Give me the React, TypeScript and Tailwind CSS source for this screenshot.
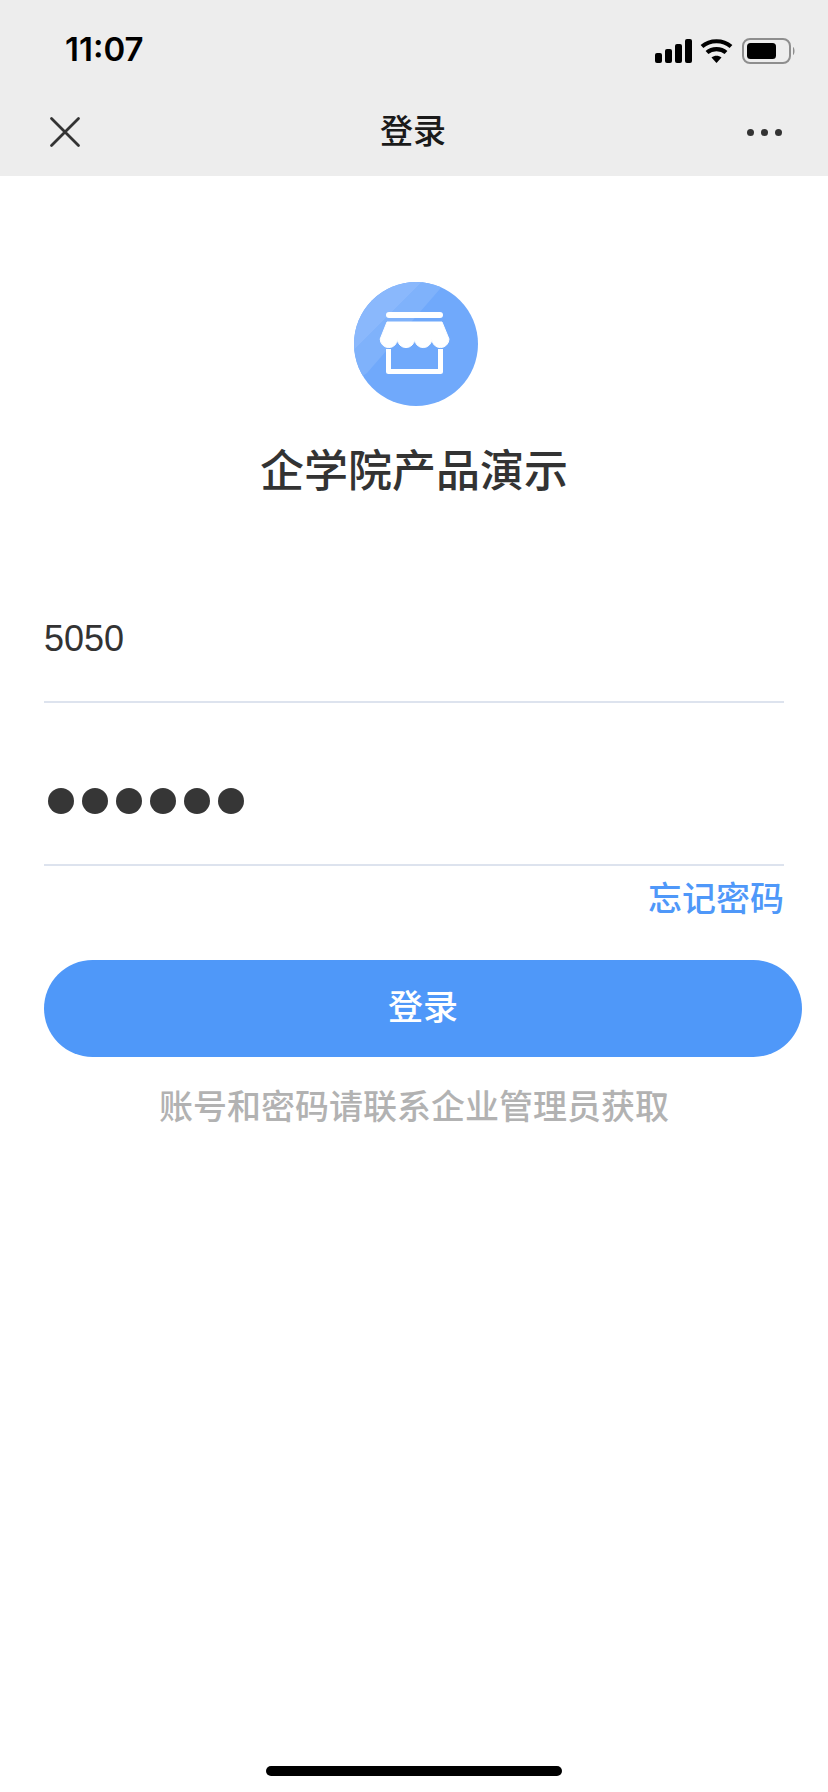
const font = { fontFamily: '"Liberation Sans","Noto Sans CJK SC",sans-serif' };

function StatusIcons() {
  return (
    <svg width="144" height="28" viewBox="0 0 144 28" className="block">
      <g fill="#000">
        <rect x="3" y="16" width="7" height="10" rx="2" />
        <rect x="13" y="12" width="7" height="14" rx="2" />
        <rect x="23" y="7" width="7" height="19" rx="2" />
        <rect x="33" y="2" width="7" height="24" rx="2" />
      </g>
      <g fill="none" stroke="#000" strokeWidth="4.2">
        <path d="M50 9.500C58 2.500 71 2.500 79 9.500" />
        <path d="M55 15.500C60 11 69 11 74 15.500" />
      </g>
      <path d="M59.500 20.500C62.500 18.300 66.500 18.300 69.500 20.500L64.500 26Z" fill="#000" />
      <rect x="91" y="2" width="47" height="24" rx="7" fill="none" stroke="#8e8e8e" strokeWidth="2" />
      <rect x="95" y="6" width="29" height="16" rx="3.500" fill="#000" />
      <path d="M141 10C143 11 143 17 141 18Z" fill="#8e8e8e" />
    </svg>
  );
}

function Logo() {
  return (
    <svg width="124" height="124" viewBox="0 0 124 124" className="block">
      <defs>
        <clipPath id="c"><circle cx="62" cy="62" r="62" /></clipPath>
      </defs>
      <g clipPath="url(#c)">
        <rect width="124" height="124" fill="#70a9fb" />
        <path d="M0 68L68 0H92L13 91L0 100Z" fill="#7fb2fb" />
        <path d="M0 68L68 0H0Z" fill="#8ab8fc" />
      </g>
      <rect x="32" y="30" width="57" height="6" rx="3" fill="#fff" />
      <path d="M33 40H88L95 57A8.600 8.600 0 0 1 77.800 57A8.600 8.600 0 0 1 60.600 57A8.600 8.600 0 0 1 43.400 57A8.600 8.600 0 0 1 26.200 57Z" fill="#fff" stroke="#fff" strokeWidth="1" strokeLinejoin="round" />
      <path d="M34.500 67V89.500H86.500V67" fill="none" stroke="#fff" strokeWidth="5" strokeLinejoin="round" strokeLinecap="butt" />
    </svg>
  );
}

export default function App() {
  return (
    <div className="relative w-[828px] h-[1792px] bg-white overflow-hidden" style={font}>
      <header className="h-[176px] bg-[#ededed] flex flex-col">
        <div className="h-[88px] flex items-end justify-between pl-[65px] pr-[32px] pb-[23px]">
          <span className="relative top-[1px] text-[33px] leading-[33px] font-semibold text-black font-['Inter']">11:07</span>
          <StatusIcons />
        </div>
        <div className="flex-1 flex items-center justify-between pl-[49px] pr-[46px]">
          <svg width="32" height="32" viewBox="0 0 32 32" className="block">
            <path d="M2.500 2.500L29.500 29.500M29.500 2.500L2.500 29.500" stroke="#333" strokeWidth="2.800" strokeLinecap="round" fill="none" />
          </svg>
          <span className="relative left-[-1px] text-[33px] leading-[40px] font-medium text-[#1a1a1a]">登录</span>
          <div className="flex gap-[7px]">
            <span className="w-[7px] h-[7px] rounded-full bg-[#333]" />
            <span className="w-[7px] h-[7px] rounded-full bg-[#333]" />
            <span className="w-[7px] h-[7px] rounded-full bg-[#333]" />
          </div>
        </div>
      </header>

      <main className="flex flex-col">
        <div className="mt-[106px] pl-[4px] flex justify-center"><Logo /></div>
        <h1 className="mt-[36px] text-center text-[44px] leading-[60px] font-medium text-[#333]">企学院产品演示</h1>

        <div className="mx-[44px] mt-[113px] h-[88px] border-b-2 border-[#dde3ee] text-[36px] leading-[48px] text-[#333]">5050</div>

        <div className="mx-[44px] h-[163px] border-b-2 border-[#dde3ee] flex items-start pt-[85px] pl-[4px] gap-[8px]">
          {[0, 1, 2, 3, 4, 5].map((i) => (
            <span key={i} className="w-[26px] h-[26px] rounded-full bg-[#363636]" />
          ))}
        </div>

        <div className="mx-[44px] mt-[11px] text-right text-[34px] leading-[44px] font-medium text-[#4f98f9]">忘记密码</div>

        <button className="ml-[44px] mt-[39px] w-[758px] h-[97px] rounded-full bg-[#4f98f9] text-white text-[35px] font-medium">登录</button>

        <p className="mt-[26px] ml-[159px] text-[34px] leading-[48px] font-medium text-[#b2b2b2] whitespace-nowrap">账号和密码请联系企业管理员获取</p>
      </main>

      <div className="absolute left-[266px] bottom-[16px] w-[296px] h-[10px] rounded-full bg-black" />
    </div>
  );
}
